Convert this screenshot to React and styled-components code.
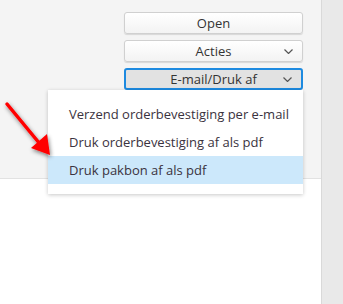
import styled, { createGlobalStyle } from 'styled-components';

const GlobalStyle = createGlobalStyle`
  html, body {
    margin: 0;
    padding: 0;
    background: #ffffff;
    font-family: "Open Sans", "Liberation Sans", sans-serif;
  }
`;

const Page = styled.div`
  display: flex;
  width: 343px;
  height: 304px;
  overflow: hidden;
  position: relative;
`;

const Main = styled.div`
  width: 321px;
  display: flex;
  flex-direction: column;
  border-right: 1px solid #d9d9d9;
`;

const Side = styled.div`
  flex: 1;
  background: #e9e9e9;
`;

const Toolbar = styled.div`
  height: 179px;
  background: #f4f4f4;
  border-bottom: 1px solid #e2e2e2;
  box-sizing: border-box;
  padding: 12px 0 0 124px;
`;

const Content = styled.div`
  flex: 1;
  background: #ffffff;
`;

const ButtonStack = styled.div`
  width: 179px;
  display: flex;
  flex-direction: column;
  gap: 6px;
`;

const Button = styled.div`
  position: relative;
  height: 22px;
  box-sizing: border-box;
  display: flex;
  align-items: center;
  justify-content: center;
  border-radius: 3px;
  font-size: 13px;
  color: #333333;
  border: ${(p) => (p.$active ? '2px solid #1d8ae0' : '1px solid #d0d0d0')};
  background: ${(p) =>
    p.$active ? '#e2e2e2' : 'linear-gradient(#ffffff, #f3f3f3)'};
  box-shadow: ${(p) => (p.$active ? 'none' : '0 1px 1px rgba(0,0,0,0.12)')};
`;

const Chevron = styled.svg`
  position: absolute;
  right: 9px;
  top: 50%;
  margin-top: -2px;
`;

const Dropdown = styled.div`
  position: relative;
`;

const Menu = styled.div`
  position: absolute;
  top: 100%;
  right: 0;
  width: 255px;
  box-sizing: border-box;
  background: #ffffff;
  padding: 10px 0;
  box-shadow: 0 1px 4px rgba(0, 0, 0, 0.22);
  z-index: 2;
`;

const MenuItem = styled.div`
  height: 28px;
  display: flex;
  align-items: center;
  padding-left: 21px;
  font-size: 13px;
  color: #3a3340;
  white-space: nowrap;
  background: ${(p) => (p.$hover ? '#cce8fb' : 'transparent')};
`;

const Arrow = styled.svg`
  position: absolute;
  left: 0;
  top: 95px;
  z-index: 3;
`;

const ChevronIcon = () => (
  <Chevron width="9" height="5" viewBox="0 0 9 5">
    <polyline points="0.5,0.5 4.5,4.5 8.5,0.5" fill="none" stroke="#555" strokeWidth="1.2" />
  </Chevron>
);

export default function App() {
  return (
    <>
      <GlobalStyle />
      <Page>
        <Main>
          <Toolbar>
            <ButtonStack>
              <Button>Open</Button>
              <Button>
                Acties
                <ChevronIcon />
              </Button>
              <Dropdown>
                <Button $active>
                  E-mail/Druk af
                  <ChevronIcon />
                </Button>
                <Menu>
                  <MenuItem>Verzend orderbevestiging per e-mail</MenuItem>
                  <MenuItem>Druk orderbevestiging af als pdf</MenuItem>
                  <MenuItem $hover>Druk pakbon af als pdf</MenuItem>
                </Menu>
              </Dropdown>
            </ButtonStack>
          </Toolbar>
          <Content />
        </Main>
        <Side />
        <Arrow width="60" height="70" viewBox="0 95 60 70">
          <defs>
            <filter id="sh" x="-30%" y="-30%" width="160%" height="160%">
              <feGaussianBlur in="SourceAlpha" stdDeviation="2" />
              <feOffset dx="1" dy="2" result="b" />
              <feComponentTransfer>
                <feFuncA type="linear" slope="0.5" />
              </feComponentTransfer>
              <feMerge>
                <feMergeNode />
                <feMergeNode in="SourceGraphic" />
              </feMerge>
            </filter>
          </defs>
          <g filter="url(#sh)">
            <line x1="7" y1="104" x2="40" y2="144" stroke="#ff0000" strokeWidth="3.5" strokeLinecap="round" />
            <polygon points="50,155 31,148 47,134" fill="#ff0000" />
          </g>
        </Arrow>
      </Page>
    </>
  );
}
